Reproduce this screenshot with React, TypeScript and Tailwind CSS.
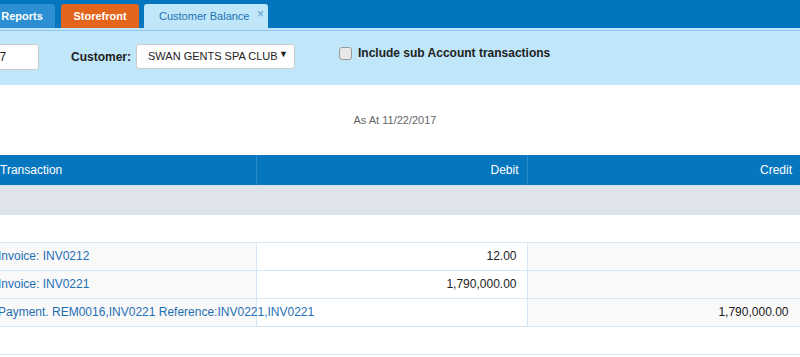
import React from 'react';

type Row = {
  label: string;
  debit?: string;
  credit?: string;
};

const rows: Row[] = [
  { label: 'Invoice: INV0212', debit: '12.00' },
  { label: 'Invoice: INV0221', debit: '1,790,000.00' },
  { label: 'Payment. REM0016,INV0221 Reference:INV0221,INV0221', credit: '1,790,000.00' },
];

export default function App() {
  return (
    <div className="w-[800px] h-[357px] overflow-hidden bg-white font-['Liberation_Sans',Arial,sans-serif] text-[12px] text-[#222]">
      {/* tabs */}
      <div className="h-[28px] bg-[#0275be] flex items-end text-[11px]">
        <div className="ml-[-11px] w-[66px] h-[24px] rounded-t-[3px] bg-[#2c8fd4] text-white font-bold flex items-center justify-center">
          Reports
        </div>
        <div className="ml-[6px] w-[78px] h-[24px] rounded-t-[3px] bg-[#e3641b] text-white font-bold flex items-center justify-center">
          Storefront
        </div>
        <div className="relative ml-[5px] w-[124px] h-[24px] rounded-t-[3px] bg-[#bfe6f9] text-[#2271b3] flex items-center pl-[15px]">
          Customer Balance
          <span className="absolute right-[4px] top-[4px] text-[12px] leading-none text-[#5b9fd4]">×</span>
        </div>
      </div>

      {/* filters */}
      <div className="h-[2px] bg-[#bfe6f9]" />
      <div className="h-[55px] bg-[#bfe6f9] border-t border-[#8fc7ee] flex items-start pt-[13px]">
        <div className="ml-[-61px] w-[100px] h-[26px] bg-white border border-[#cccccc] rounded-[3px] pl-[7px] flex items-center">
          11/22/2017
        </div>
        <div className="ml-[32px] h-[26px] flex items-center font-bold">Customer:</div>
        <div className="relative ml-[5px] w-[159px] h-[25px] bg-white border border-[#cccccc] rounded-[3px] pl-[11px] flex items-center whitespace-nowrap text-[11px]">
          <span>SWAN GENTS SPA CLUB</span>
          <span className="absolute right-[6px] top-[5px] text-[9px] leading-none">▼</span>
        </div>
        <label className="ml-[44px] flex items-center gap-[6px] font-bold">
          <span className="w-[13px] h-[13px] rounded-[3px] border border-[#9a9a9a] bg-[#e9e9e9]" />
          Include sub Account transactions
        </label>
      </div>

      {/* title */}
      <div className="h-[70px] flex items-center justify-center pr-[10px] text-[11px] text-[#666]">
        As At 11/22/2017
      </div>

      {/* table */}
      <table className="ml-[-10px] w-[810px] table-fixed border-collapse">
        <colgroup>
          <col className="w-[266px]" />
          <col className="w-[271px]" />
          <col className="w-[273px]" />
        </colgroup>
        <thead>
          <tr className="h-[30px] bg-[#0677be] text-white">
            <th className="font-normal text-left pl-[10px]">Transaction</th>
            <th className="font-normal text-right pr-[8px] border-l border-[#2a89c9]">Debit</th>
            <th className="font-normal text-right pr-[8px] border-l border-[#2a89c9]">Credit</th>
          </tr>
        </thead>
        <tbody>
          <tr className="h-[29px]">
            <td colSpan={3} className="bg-[#dfe4ec] border-b border-[#d6e6f4]" />
          </tr>
          <tr className="h-[28px]">
            <td colSpan={3} className="border-b border-r border-[#d6e6f4]" />
          </tr>
          {rows.map((r) => (
            <tr key={r.label} className="h-[28px]">
              <td className="bg-[#f9f9f9] text-[#1f6fb5] pl-[8px] whitespace-nowrap overflow-visible border-b border-[#d6e6f4]">
                {r.label}
              </td>
              <td className="bg-white text-right pr-[10px] border-l border-b border-[#d6e6f4]">
                {r.debit}
              </td>
              <td className="bg-[#f9f9f9] text-right pr-[11px] border-l border-b border-r border-[#d6e6f4]">
                {r.credit}
              </td>
            </tr>
          ))}
          <tr className="h-[28px]">
            <td colSpan={3} className="border-b border-r border-[#d6e6f4]" />
          </tr>
        </tbody>
      </table>
    </div>
  );
}
